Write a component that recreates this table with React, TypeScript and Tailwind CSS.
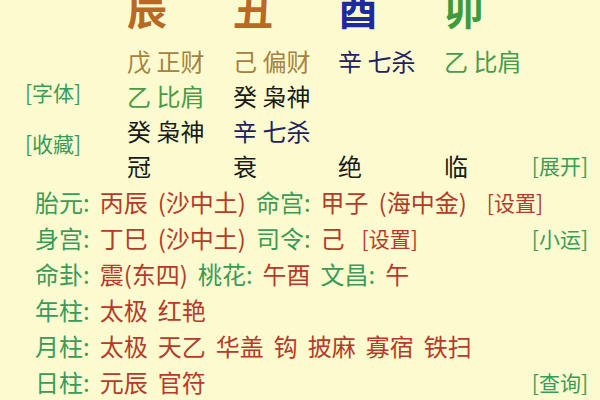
const green = 'text-[#3c9a58]'
const red = 'text-[#b53a2a]'

type Cell = { t: string; c: string }

const colW = ['w-[106px]', 'w-[105px]', 'w-[106px]', 'w-[86px]']

function TopRow({ cells, extra }: { cells: Cell[]; extra?: string }) {
  return (
    <div className="flex items-center h-[34.8px] text-[24px] leading-none">
      {cells.map((cell, i) => (
        <span key={i} className={`${colW[i]} shrink-0 whitespace-pre ${cell.c}`}>
          {cell.t}
        </span>
      ))}
      {extra && <span className={`ml-auto pr-[12px] text-[21px] ${green}`}>{extra}</span>}
    </div>
  )
}

function Line({ children }: { children: React.ReactNode }) {
  return <div className="flex items-center gap-[10px] h-[36px] pl-[35px] pr-[12px] text-[24px] leading-none whitespace-nowrap">{children}</div>
}

export default function App() {
  return (
    <div className="w-[600px] h-[400px] overflow-hidden bg-[#fcfbcf] font-['Noto_Sans_CJK_SC','Noto_Sans',sans-serif]">
      <div className="flex">
        {/* 左侧菜单 */}
        <div className={`w-[127px] shrink-0 pl-[25px] pt-[79px] flex flex-col gap-[25px] text-[21px] leading-[26px] ${green}`}>
          <span>[字体]</span>
          <span>[收藏]</span>
        </div>

        <div className="flex-1">
          {/* 地支 */}
          <div className="flex h-[44px] items-start text-[40px] leading-none font-bold">
            <span className="w-[106px] -mt-[12px] text-[#b86a24]">辰</span>
            <span className="w-[105px] -mt-[12px] text-[#b86a24]">丑</span>
            <span className="w-[106px] -mt-[12px] text-[#1c2a9c]">酉</span>
            <span className="w-[86px] -mt-[12px] text-[#3d9a3d]">卯</span>
          </div>
          <TopRow
            cells={[
              { t: '戊 正财', c: 'text-[#a5823f]' },
              { t: '己 偏财', c: 'text-[#a5823f]' },
              { t: '辛 七杀', c: 'text-[#1f2260]' },
              { t: '乙 比肩', c: 'text-[#4a9a4a]' },
            ]}
          />
          <TopRow
            cells={[
              { t: '乙 比肩', c: 'text-[#4a9a4a]' },
              { t: '癸 枭神', c: 'text-[#1a1a1a]' },
            ]}
          />
          <TopRow
            cells={[
              { t: '癸 枭神', c: 'text-[#1a1a1a]' },
              { t: '辛 七杀', c: 'text-[#1f2260]' },
            ]}
          />
          <TopRow
            cells={[
              { t: '冠', c: 'text-[#1a1a1a]' },
              { t: '衰', c: 'text-[#1a1a1a]' },
              { t: '绝', c: 'text-[#1a1a1a]' },
              { t: '临', c: 'text-[#1a1a1a]' },
            ]}
            extra="[展开]"
          />
        </div>
      </div>

      {/* 详细信息 */}
      <div className="pt-[1px]">
        <Line>
          <span className={green}>胎元:</span>
          <span className={red}>丙辰</span>
          <span className={red}>(沙中土)</span>
          <span className={green}>命宫:</span>
          <span className={red}>甲子</span>
          <span className={red}>(海中金)</span>
          <span className={`ml-[10px] text-[21px] ${red}`}>[设置]</span>
        </Line>
        <Line>
          <span className={green}>身宫:</span>
          <span className={red}>丁巳</span>
          <span className={red}>(沙中土)</span>
          <span className={green}>司令:</span>
          <span className={red}>己</span>
          <span className={`ml-[7px] text-[21px] ${red}`}>[设置]</span>
          <span className={`ml-auto text-[21px] ${green}`}>[小运]</span>
        </Line>
        <Line>
          <span className={green}>命卦:</span>
          <span className={red}>震(东四)</span>
          <span className={green}>桃花:</span>
          <span className={red}>午酉</span>
          <span className={green}>文昌:</span>
          <span className={red}>午</span>
        </Line>
        <Line>
          <span className={green}>年柱:</span>
          <span className={red}>太极</span>
          <span className={red}>红艳</span>
        </Line>
        <Line>
          <span className={green}>月柱:</span>
          {['太极', '天乙', '华盖', '钩', '披麻', '寡宿', '铁扫'].map((w) => (
            <span key={w} className={red}>
              {w}
            </span>
          ))}
        </Line>
        <Line>
          <span className={green}>日柱:</span>
          <span className={red}>元辰</span>
          <span className={red}>官符</span>
          <span className={`ml-auto text-[21px] ${green}`}>[查询]</span>
        </Line>
      </div>
    </div>
  )
}
